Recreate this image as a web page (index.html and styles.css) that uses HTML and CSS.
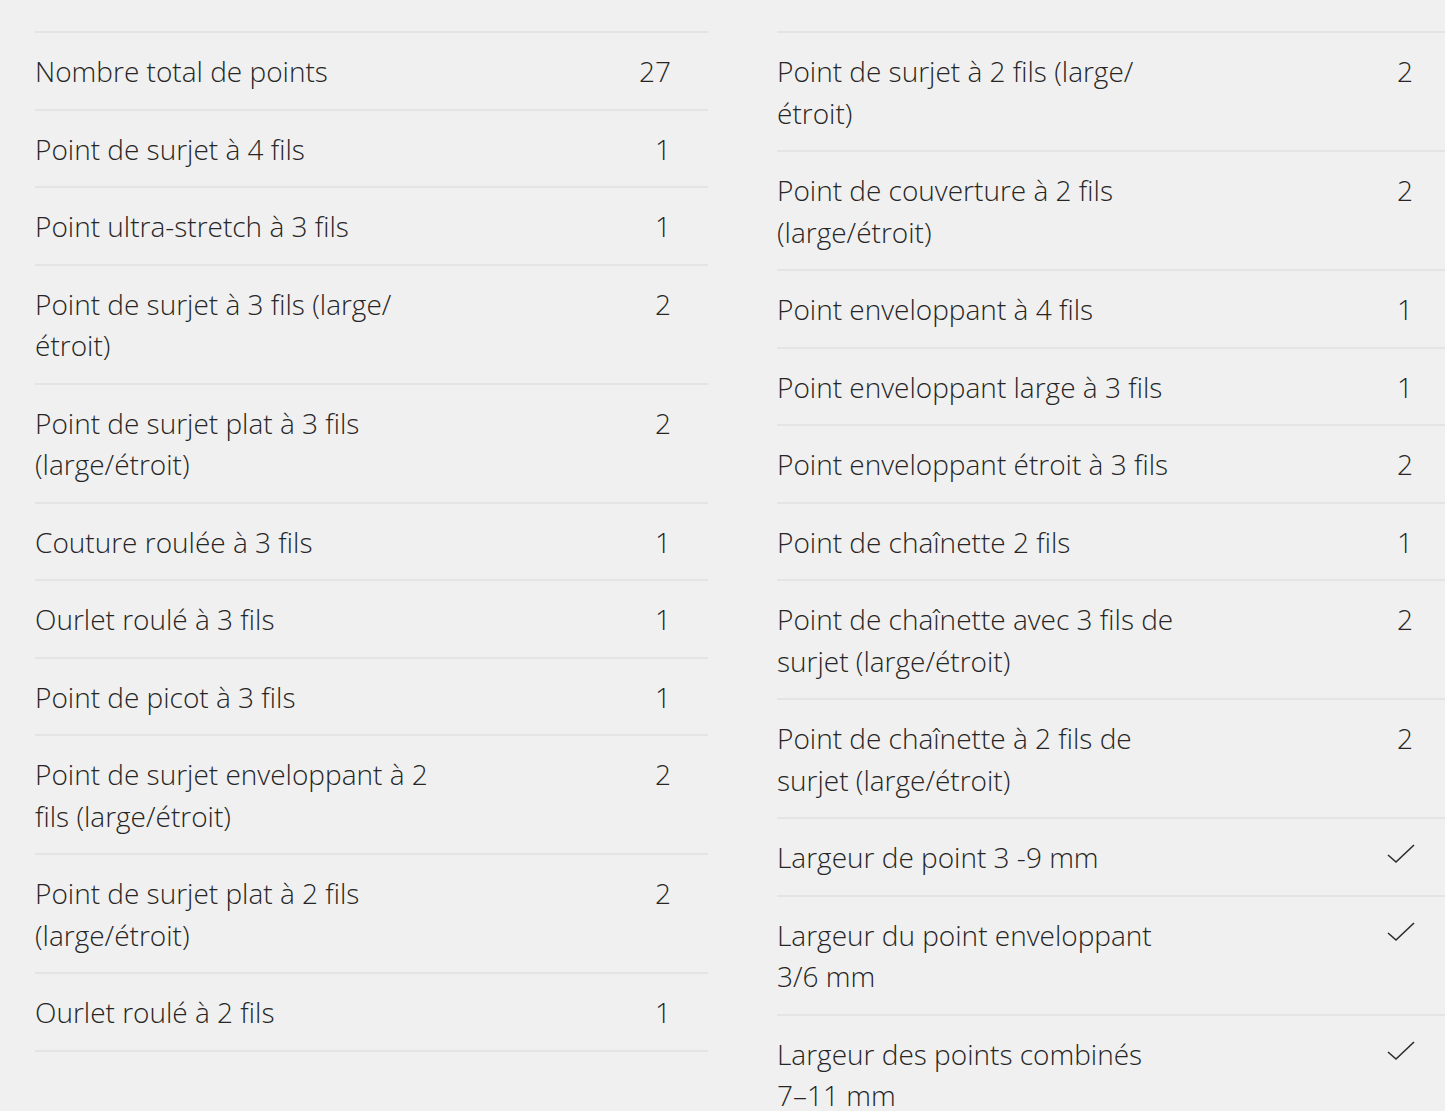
FILE: index.html
```html
<!DOCTYPE html>
<html lang="fr">
<head>
<meta charset="utf-8">
<title>Caractéristiques</title>
<link rel="stylesheet" href="styles.css">
</head>
<body>
<div class="specs">
  <dl class="col">
    <div class="row"><dt>Nombre total de points</dt><dd>27</dd></div>
    <div class="row"><dt>Point de surjet à 4 fils</dt><dd>1</dd></div>
    <div class="row"><dt>Point ultra-stretch à 3 fils</dt><dd>1</dd></div>
    <div class="row"><dt>Point de surjet à 3 fils (large/ étroit)</dt><dd>2</dd></div>
    <div class="row"><dt>Point de surjet plat à 3 fils (large/étroit)</dt><dd>2</dd></div>
    <div class="row"><dt>Couture roulée à 3 fils</dt><dd>1</dd></div>
    <div class="row"><dt>Ourlet roulé à 3 fils</dt><dd>1</dd></div>
    <div class="row"><dt>Point de picot à 3 fils</dt><dd>1</dd></div>
    <div class="row"><dt>Point de surjet enveloppant à 2 fils (large/étroit)</dt><dd>2</dd></div>
    <div class="row"><dt>Point de surjet plat à 2 fils (large/étroit)</dt><dd>2</dd></div>
    <div class="row"><dt>Ourlet roulé à 2 fils</dt><dd>1</dd></div>
  </dl>
  <dl class="col">
    <div class="row"><dt>Point de surjet à 2 fils (large/ étroit)</dt><dd>2</dd></div>
    <div class="row"><dt>Point de couverture à 2 fils (large/étroit)</dt><dd>2</dd></div>
    <div class="row"><dt>Point enveloppant à 4 fils</dt><dd>1</dd></div>
    <div class="row"><dt>Point enveloppant large à 3 fils</dt><dd>1</dd></div>
    <div class="row"><dt>Point enveloppant étroit à 3 fils</dt><dd>2</dd></div>
    <div class="row"><dt>Point de chaînette 2 fils</dt><dd>1</dd></div>
    <div class="row"><dt>Point de chaînette avec 3 fils de surjet (large/étroit)</dt><dd>2</dd></div>
    <div class="row"><dt>Point de chaînette à 2 fils de surjet (large/étroit)</dt><dd>2</dd></div>
    <div class="row"><dt>Largeur de point 3 -9 mm</dt><dd class="check"><svg width="28" height="22" viewBox="0 0 28 22"><polyline points="1,12 9,19 27,2" fill="none" stroke="#2b2b2b" stroke-width="1.6"/></svg></dd></div>
    <div class="row"><dt>Largeur du point enveloppant 3/6 mm</dt><dd class="check"><svg width="28" height="22" viewBox="0 0 28 22"><polyline points="1,12 9,19 27,2" fill="none" stroke="#2b2b2b" stroke-width="1.6"/></svg></dd></div>
    <div class="row"><dt>Largeur des points combinés <span class="nowrap">7–11</span> mm</dt><dd class="check"><svg width="28" height="22" viewBox="0 0 28 22"><polyline points="1,12 9,19 27,2" fill="none" stroke="#2b2b2b" stroke-width="1.6"/></svg></dd></div>
  </dl>
</div>
</body>
</html>
```
FILE: styles.css
```css
html, body {
  margin: 0;
  padding: 0;
  overflow: hidden;
  background: #f0f0f0;
}
body {
  font-family: "Open Sans", "Liberation Sans", sans-serif;
  font-weight: 300;
  color: #262626;
}
.specs {
  display: flex;
  gap: 69px;
  padding: 31px 0 0 35px;
  width: 1500px;
}
.col {
  width: 673px;
  flex: none;
  margin: 0;
  border-top: 2px solid #e4e4e4;
}
.row {
  display: flex;
  justify-content: space-between;
  align-items: flex-start;
  padding: 18px 37px 16px 0;
  border-bottom: 2px solid #e4e4e4;
  font-size: 28px;
  line-height: 41.5px;
}
.row dt {
  width: 410px;
}
.row dd {
  margin: 0;
  text-align: right;
}
.row dd.check {
  padding-top: 6px;
  margin-right: -2px;
  line-height: 0;
}
.nowrap {
  white-space: nowrap;
}
```
